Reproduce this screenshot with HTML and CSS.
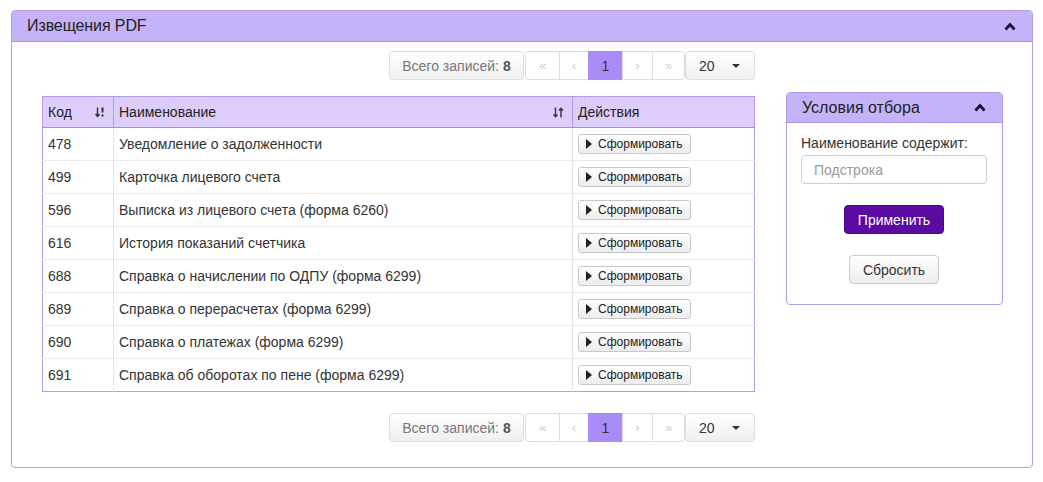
FILE: index.html
```html
<!DOCTYPE html>
<html lang="ru">
<head>
<meta charset="utf-8">
<title>Извещения PDF</title>
<link rel="stylesheet" href="styles.css">
</head>
<body>
<div class="panel">
  <div class="panel-head">
    <span class="panel-title">Извещения PDF</span>
    <svg class="chev" width="12" height="9" viewBox="0 0 12 9"><path d="M1.5 7.5 L6 2.5 L10.5 7.5" fill="none" stroke="#1e0b3a" stroke-width="2.8"/></svg>
  </div>
  <div class="panel-body">
    <div class="main-col">
      <div class="pager-row">
        <div class="total">Всего записей: <b>8</b></div>
        <div class="pages">
          <span class="pg dis">«</span><span class="pg dis">‹</span><span class="pg act">1</span><span class="pg dis">›</span><span class="pg dis">»</span>
        </div>
        <div class="size">20 <span class="caret"></span></div>
      </div>
      <table class="grid">
        <thead>
          <tr>
            <th class="c-code"><div class="th-in">Код <svg width="10" height="11" viewBox="0 0 10 11"><path d="M2.5 0.5 V9 M0.5 7 L2.5 9.5 L4.5 7" fill="none" stroke="#333" stroke-width="1.4"/><rect x="6.5" y="0.5" width="2" height="5" fill="#333"/><rect x="6.5" y="7.5" width="2" height="2" fill="#333"/></svg></div></th>
            <th class="c-name"><div class="th-in">Наименование <svg width="11" height="11" viewBox="0 0 11 11"><path d="M2.5 0.5 V9.5 M0.5 7.5 L2.5 9.8 L4.5 7.5" fill="none" stroke="#333" stroke-width="1.4"/><path d="M8 10.5 V1.5 M6 3.5 L8 1.2 L10 3.5" fill="none" stroke="#333" stroke-width="1.4"/></svg></div></th>
            <th class="c-act">Действия</th>
          </tr>
        </thead>
        <tbody>
          <tr><td>478</td><td>Уведомление о задолженности</td><td><button class="gen"><span class="tri"></span>Сформировать</button></td></tr>
          <tr><td>499</td><td>Карточка лицевого счета</td><td><button class="gen"><span class="tri"></span>Сформировать</button></td></tr>
          <tr><td>596</td><td>Выписка из лицевого счета (форма 6260)</td><td><button class="gen"><span class="tri"></span>Сформировать</button></td></tr>
          <tr><td>616</td><td>История показаний счетчика</td><td><button class="gen"><span class="tri"></span>Сформировать</button></td></tr>
          <tr><td>688</td><td>Справка о начислении по ОДПУ (форма 6299)</td><td><button class="gen"><span class="tri"></span>Сформировать</button></td></tr>
          <tr><td>689</td><td>Справка о перерасчетах (форма 6299)</td><td><button class="gen"><span class="tri"></span>Сформировать</button></td></tr>
          <tr><td>690</td><td>Справка о платежах (форма 6299)</td><td><button class="gen"><span class="tri"></span>Сформировать</button></td></tr>
          <tr><td>691</td><td>Справка об оборотах по пене (форма 6299)</td><td><button class="gen"><span class="tri"></span>Сформировать</button></td></tr>
        </tbody>
      </table>
      <div class="pager-row bottom">
        <div class="total">Всего записей: <b>8</b></div>
        <div class="pages">
          <span class="pg dis">«</span><span class="pg dis">‹</span><span class="pg act">1</span><span class="pg dis">›</span><span class="pg dis">»</span>
        </div>
        <div class="size">20 <span class="caret"></span></div>
      </div>
    </div>
    <div class="side">
      <div class="side-head">
        <span>Условия отбора</span>
        <svg class="chev" width="12" height="9" viewBox="0 0 12 9"><path d="M1.5 7.5 L6 2.5 L10.5 7.5" fill="none" stroke="#1e0b3a" stroke-width="2.8"/></svg>
      </div>
      <div class="side-body">
        <div class="lbl">Наименование содержит:</div>
        <input class="inp" type="text" placeholder="Подстрока">
        <button class="apply">Применить</button>
        <button class="reset">Сбросить</button>
      </div>
    </div>
  </div>
</div>
</body>
</html>
```
FILE: styles.css
```css
* { box-sizing: border-box; }
body {
  margin: 0;
  padding: 10px 10px 0 11px;
  font-family: "Liberation Sans", Arial, sans-serif;
  font-size: 14px;
  color: #333;
  background: #fff;
}
.panel {
  width: 1022px;
  height: 458px;
  border: 1px solid #b49be6;
  border-radius: 4px;
}
.panel-head {
  height: 31px;
  background: #c5b3f9;
  border-bottom: 1px solid #ad93e8;
  border-radius: 3px 3px 0 0;
  display: flex;
  align-items: center;
  justify-content: space-between;
  padding: 0 16px 0 15px;
}
.panel-title { font-size: 16px; color: #222; letter-spacing: -0.1px; }
.panel-body {
  display: flex;
  padding: 9px 30px 0 30px;
  gap: 31px;
}
.main-col { width: 713px; }
.pager-row {
  display: flex;
  justify-content: flex-end;
  height: 29px;
}
.pager-row.bottom { margin-top: 21px; }
.total {
  width: 135px;
  height: 29px;
  border: 1px solid #ddd;
  border-radius: 4px;
  background: linear-gradient(#fff, #efefef);
  color: #777;
  display: flex;
  align-items: center;
  justify-content: center;
  margin-right: 1px;
}
.total b { color: #555; margin-left: 4px; }
.pages {
  display: flex;
  height: 29px;
}
.pg {
  height: 29px;
  border: 1px solid #ddd;
  margin-left: -1px;
  display: flex;
  align-items: center;
  justify-content: center;
  color: #ccc;
  font-size: 13px;
}
.pg:nth-child(1) { width: 35px; border-radius: 4px 0 0 4px; margin-left: 0; }
.pg:nth-child(2) { width: 30px; }
.pg:nth-child(3) { width: 35px; }
.pg:nth-child(4) { width: 31px; }
.pg:nth-child(5) { width: 33px; border-radius: 0 4px 4px 0; }
.pg.act { background: #a98bf8; border-color: #a98bf8; color: #333; font-size: 14px; }
.size {
  width: 70px;
  height: 29px;
  border: 1px solid #ddd;
  border-radius: 4px;
  background: linear-gradient(#fff, #efefef);
  display: flex;
  align-items: center;
  justify-content: space-between;
  padding: 0 14px 0 13px;
  color: #333;
}
.caret {
  width: 0; height: 0;
  border-left: 4px solid transparent;
  border-right: 4px solid transparent;
  border-top: 4px solid #333;
}
.grid {
  margin-top: 16px;
  width: 713px;
  border-collapse: collapse;
  border: 1px solid #b49be6;
}
.grid th {
  height: 31px;
  background: #dccdfb;
  font-weight: normal;
  text-align: left;
  padding: 0 5px;
  border-left: 1px solid #b49be6;
  border-bottom: 1px solid #a98ae0;
  color: #222;
}
.th-in { display: flex; justify-content: space-between; align-items: center; }
.th-in svg { margin-right: 3px; }
.c-code { width: 71px; }
.c-name { width: 459px; }
.grid td {
  height: 33px;
  padding: 0 5px;
  border-left: 1px solid #e4e4e4;
  border-top: 1px solid #ebebeb;
  color: #333;
}
.grid tr td:first-child { border-left: none; }
.grid tbody tr:first-child td { border-top: none; }
.gen {
  height: 20px;
  width: 113px;
  font-family: "Liberation Sans", Arial, sans-serif;
  font-size: 12px;
  color: #222;
  border: 1px solid #c8c8c8;
  border-radius: 3px;
  background: linear-gradient(#fff, #ececec);
  display: flex;
  align-items: center;
  padding: 0 0 0 7px;
}
.tri {
  width: 0; height: 0;
  border-top: 5px solid transparent;
  border-bottom: 5px solid transparent;
  border-left: 6px solid #222;
  margin-right: 6px;
}
.side {
  margin-top: 41px;
  width: 217px;
  height: 213px;
  border: 1px solid #b49be6;
  border-radius: 4px;
}
.side-head {
  height: 30px;
  background: #c5b3f9;
  border-bottom: 1px solid #ad93e8;
  border-radius: 3px 3px 0 0;
  display: flex;
  align-items: center;
  justify-content: space-between;
  padding: 0 16px 0 15px;
  font-size: 16px;
  color: #222;
}
.side-body {
  display: flex;
  flex-direction: column;
  align-items: center;
  padding: 11px 15px 0 14px;
}
.lbl { align-self: flex-start; color: #333; font-size: 14px; line-height: 18px; }
.inp {
  margin-top: 3px;
  width: 186px;
  height: 29px;
  border: 1px solid #ccc;
  border-radius: 4px;
  padding: 0 12px;
  font-family: "Liberation Sans", Arial, sans-serif;
  font-size: 14px;
  color: #333;
  align-self: flex-start;
}
.inp::placeholder { color: #999; }
.apply {
  margin-top: 21px;
  width: 100px;
  height: 29px;
  background: #5b0aa2;
  border: 1px solid #4a0788;
  border-radius: 4px;
  color: #fff;
  font-family: "Liberation Sans", Arial, sans-serif;
  font-size: 14px;
}
.reset {
  margin-top: 21px;
  width: 90px;
  height: 29px;
  background: linear-gradient(#fff, #ececec);
  border: 1px solid #ccc;
  border-radius: 4px;
  color: #333;
  font-family: "Liberation Sans", Arial, sans-serif;
  font-size: 14px;
}
```
